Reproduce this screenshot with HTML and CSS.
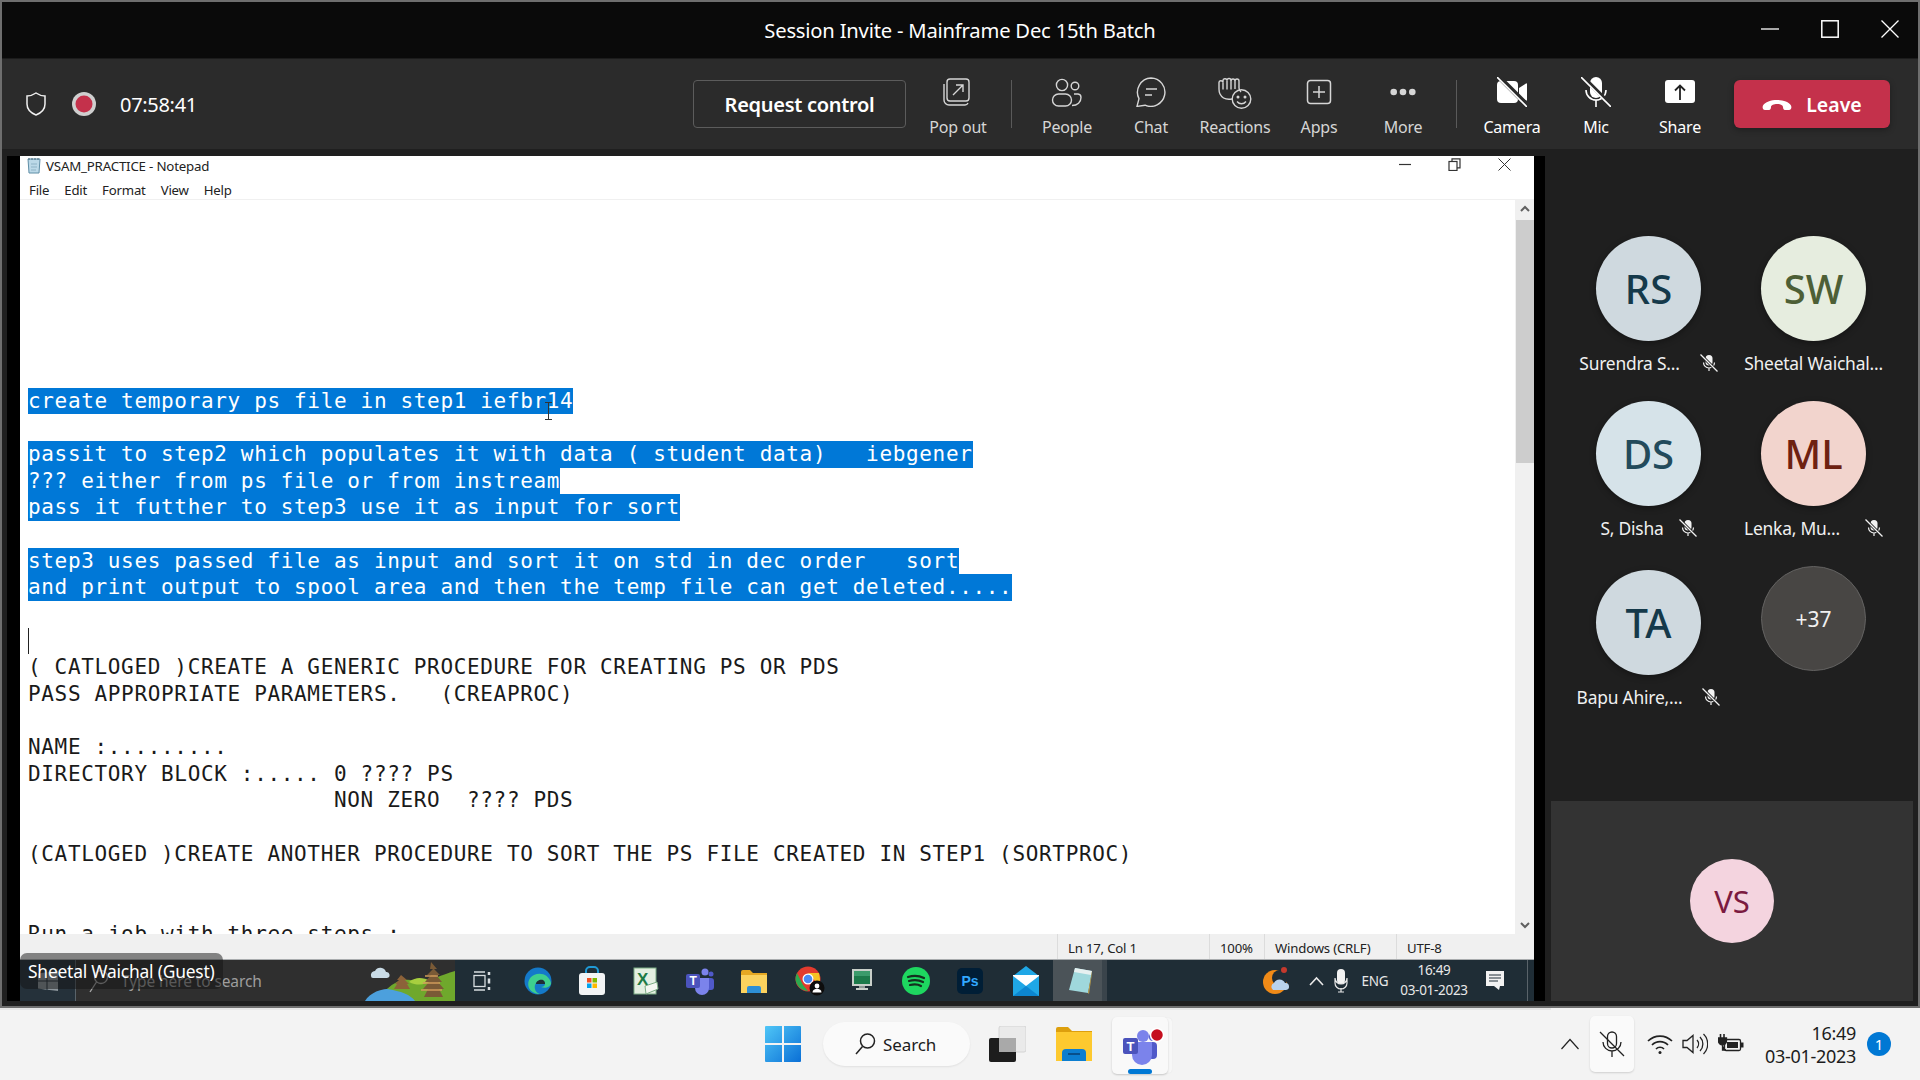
FILE: index.html
```html
<!DOCTYPE html>
<html lang="en">
<head>
<meta charset="utf-8">
<title>Session Invite - Mainframe Dec 15th Batch</title>
<link rel="stylesheet" href="styles.css">
</head>
<body>
<svg class="defs" width="0" height="0">
  <symbol id="micoff" viewBox="0 0 18 18">
    <rect x="5.5" y="1" width="7" height="10.5" rx="3.5" fill="#f2f2f2"/>
    <path d="M3.5 8.5a5.5 5.5 0 0 0 11 0M9 14v3" fill="none" stroke="#f2f2f2" stroke-width="1.2"/>
    <path d="M1.5 1.5l15 15" stroke="#1f1f1f" stroke-width="3"/>
    <path d="M.5 .5l17 17" stroke="#f2f2f2" stroke-width="1.2"/>
  </symbol>
</svg>
<div class="app">
  <header class="titlebar">
    <div class="title">Session Invite - Mainframe Dec 15th Batch</div>
    <div class="winctl">
      <svg width="18" height="18" viewBox="0 0 18 18"><path d="M0 9h18" stroke="#fff" stroke-width="1.3"/></svg>
      <svg width="18" height="18" viewBox="0 0 18 18"><rect x=".8" y=".8" width="16.4" height="16.4" fill="none" stroke="#fff" stroke-width="1.5"/></svg>
      <svg width="18" height="18" viewBox="0 0 18 18"><path d="M.5 .5l17 17M17.5 .5l-17 17" stroke="#fff" stroke-width="1.3"/></svg>
    </div>
  </header>

  <nav class="toolbar">
    <svg class="shield" width="20" height="24" viewBox="0 0 20 24"><path d="M10 1c3 2 5.500 3 9 3v8c0 5-4 9-9 11-5-2-9-6-9-11V4c3.500 0 6-1 9-3z" fill="none" stroke="#f0f0f0" stroke-width="1.5"/></svg>
    <svg class="rec" width="24" height="24" viewBox="0 0 24 24"><circle cx="12" cy="12" r="12" fill="#cfcfcf"/><circle cx="12" cy="12" r="8.500" fill="#c4314b"/></svg>
    <div class="clock">07:58:41</div>
    <div class="spring"></div>
    <button class="request">Request control</button>
    <div class="tool">
      <svg width="30" height="30" viewBox="2 0 30 30" fill="none" stroke="#d6d6d6" stroke-width="1.4"><rect x="6" y="2" width="22" height="22" rx="3"/><path d="M3 7v16a5 5 0 0 0 5 5h16a3.500 3.500 0 0 0 3-2"/><path d="M12 18l10-10M15 8h7v7"/></svg>
      <span>Pop out</span>
    </div>
    <div class="tsep"></div>
    <div class="tool">
      <svg width="32" height="30" viewBox="0 0 32 30" fill="none" stroke="#d6d6d6" stroke-width="1.4"><circle cx="11" cy="8" r="5.600"/><circle cx="24" cy="9" r="3.800"/><rect x="1.500" y="17" width="19" height="12" rx="6"/><path d="M23 17h4a3.500 3.500 0 0 1 3 3.500c0 4.500-3.500 8-9 8"/></svg>
      <span>People</span>
    </div>
    <div class="tool">
      <svg width="32" height="30" viewBox="0 0 32 30" fill="none" stroke="#d6d6d6" stroke-width="1.4"><path d="M16 1a14.200 14.200 0 1 1-6 27.200L2 29.400l2-7.800A14.200 14.200 0 0 1 16 1z"/><path d="M11 12h11M10 18h7"/></svg>
      <span>Chat</span>
    </div>
    <div class="tool">
      <svg width="34" height="32" viewBox="0 0 34 32" fill="none" stroke="#d6d6d6" stroke-width="1.4"><path d="M14 22c-6 1-10-1-12-5-1-2-1-4-1-5V6a2 2 0 0 1 4-.5V4a2 2 0 0 1 4-.5 2 2 0 0 1 4 0V4a2 2 0 0 1 4 0 2 2 0 0 1 4 0v7c0 2 1 3 2 4"/><path d="M5 5.500v7M9 3.500v9M13 3.500v9M17 4v8"/><circle cx="23.500" cy="22" r="9.300"/><circle cx="20" cy="20" r=".8" fill="#d6d6d6"/><circle cx="27" cy="20" r=".8" fill="#d6d6d6"/><path d="M19 24.500c2.500 3 6.500 3 9 0"/></svg>
      <span>Reactions</span>
    </div>
    <div class="tool">
      <svg width="30" height="30" viewBox="0 0 30 30" fill="none" stroke="#d6d6d6" stroke-width="1.5"><rect x="3.500" y="3.500" width="23" height="23" rx="3"/><path d="M15 9v12M9 15h12"/></svg>
      <span>Apps</span>
    </div>
    <div class="tool">
      <svg width="30" height="30" viewBox="0 0 30 30" fill="#d6d6d6"><circle cx="5.700" cy="15" r="3.300"/><circle cx="15" cy="15" r="3.300"/><circle cx="24.300" cy="15" r="3.300"/></svg>
      <span>More</span>
    </div>
    <div class="tsep"></div>
    <div class="tool tool-on">
      <svg width="30" height="30" viewBox="0 0 30 30"><rect y="4" width="21" height="22" rx="4" fill="#fff"/><path d="M22 11l7-4.500a.7.700 0 0 1 1 .5v16a.7.700 0 0 1-1 .5L22 19z" fill="#fff"/><path d="M2 0l28 28" stroke="#2b2b2b" stroke-width="5"/><path d="M0 0l30 30" stroke="#fff" stroke-width="1.600"/></svg>
      <span>Camera</span>
    </div>
    <div class="tool tool-on">
      <svg width="30" height="30" viewBox="0 0 30 30"><rect x="9" y="0" width="12" height="21" rx="6" fill="#fff"/><path d="M5 13a10 10 0 0 0 20 0M15 23v7" fill="none" stroke="#fff" stroke-width="1.600"/><path d="M2 0l28 28" stroke="#2b2b2b" stroke-width="4"/><path d="M0 0l30 30" stroke="#fff" stroke-width="1.600"/></svg>
      <span>Mic</span>
    </div>
    <div class="tool tool-on">
      <svg width="30" height="30" viewBox="0 0 30 30"><rect y="3" width="30" height="23" rx="3" fill="#fff"/><path d="M15 23V9M10 13.500L15 8.500l5 5" fill="none" stroke="#222" stroke-width="1.800"/></svg>
      <span>Share</span>
    </div>
    <button class="leave">
      <svg width="30" height="14" viewBox="0 0 30 14"><path d="M1 8.500C5 1 25 1 29 8.500c1 2.500 0 4.500-2 4.500h-4c-1.500 0-2-1.500-2-3 0-2-3-3-6-3s-6 1-6 3c0 1.500-.5 3-2 3H3c-2 0-3-2-2-4.500z" fill="#fff"/></svg>
      <span>Leave</span>
    </button>
  </nav>

  <main class="stage">
    <section class="share">
      <div class="notepad">
        <div class="np-title">
          <svg width="17" height="18" viewBox="0 0 17 18"><path d="M2 2h12l-1 14H3z" fill="#bcd9e8" stroke="#5f8ea6" stroke-width="1"/><path d="M3 1v2M6 1v2M9 1v2M12 1v2" stroke="#4a6b7c"/><path d="M5 7h6M5 10h6M5 13h5" stroke="#8fb3c6"/></svg>
          <span>VSAM_PRACTICE - Notepad</span>
          <div class="np-ctl">
            <svg width="12" height="12" viewBox="0 0 12 12"><path d="M0 6.500h12" stroke="#333" stroke-width="1.200"/></svg>
            <svg width="13" height="13" viewBox="0 0 13 13" fill="none" stroke="#333" stroke-width="1.200"><rect x="1" y="3.500" width="8" height="9"/><path d="M4 3.500V.8h8v9H9"/></svg>
            <svg width="13" height="13" viewBox="0 0 13 13"><path d="M.5 .5l12 12M12.500 .5l-12 12" stroke="#333" stroke-width="1"/></svg>
          </div>
        </div>
        <div class="np-menu"><span>File</span><span>Edit</span><span>Format</span><span>View</span><span>Help</span></div>
        <div class="np-body">
          <div class="doc">
            <div class="ln"> </div><div class="ln"> </div><div class="ln"> </div><div class="ln"> </div><div class="ln"> </div><div class="ln"> </div><div class="ln"> </div>
            <div class="ln"><span class="sel">create temporary ps file in step1 iefbr14</span></div>
            <div class="ln"> </div>
            <div class="ln"><span class="sel">passit to step2 which populates it with data ( student data)   iebgener</span></div>
            <div class="ln"><span class="sel">??? either from ps file or from instream</span></div>
            <div class="ln"><span class="sel">pass it futther to step3 use it as input for sort</span></div>
            <div class="ln"> </div>
            <div class="ln"><span class="sel">step3 uses passed file as input and sort it on std in dec order   sort</span></div>
            <div class="ln"><span class="sel">and print output to spool area and then the temp file can get deleted.....</span></div>
            <div class="ln"> </div>
            <div class="ln caret"> </div>
            <div class="ln">( CATLOGED )CREATE A GENERIC PROCEDURE FOR CREATING PS OR PDS</div>
            <div class="ln">PASS APPROPRIATE PARAMETERS.   (CREAPROC)</div>
            <div class="ln"> </div>
            <div class="ln">NAME :.........</div>
            <div class="ln">DIRECTORY BLOCK :..... 0 ???? PS</div>
            <div class="ln">                       NON ZERO  ???? PDS</div>
            <div class="ln"> </div>
            <div class="ln">(CATLOGED )CREATE ANOTHER PROCEDURE TO SORT THE PS FILE CREATED IN STEP1 (SORTPROC)</div>
            <div class="ln"> </div>
            <div class="ln"> </div>
            <div class="ln">Run a job with three steps :</div>
            <svg class="ibeam" width="9" height="18" viewBox="0 0 9 18"><path d="M1 .5h7M4.500 .5v17M1 17.500h7" stroke="#333" stroke-width="1" fill="none"/></svg>
          </div>
          <div class="scroll">
            <svg class="sc-arrow" width="18" height="18" viewBox="0 0 18 18"><path d="M5 11l4-4 4 4" fill="none" stroke="#606060" stroke-width="2"/></svg>
            <div class="sc-thumb"></div>
            <svg class="sc-arrow sc-down" width="18" height="18" viewBox="0 0 18 18"><path d="M5 7l4 4 4-4" fill="none" stroke="#606060" stroke-width="2"/></svg>
          </div>
        </div>
        <div class="np-status">
          <span class="st st-ln">Ln 17, Col 1</span>
          <span class="st st-zoom">100%</span>
          <span class="st st-crlf">Windows (CRLF)</span>
          <span class="st st-enc">UTF-8</span>
        </div>
      </div>

      <div class="w10bar">
        <div class="w10start">
          <svg width="20" height="20" viewBox="0 0 20 20" fill="#8b949a"><path d="M0 2.500l8.500-1.200V9.500H0zM9.500 1.200L20 0v9.500H9.500zM0 10.500h8.500v8.200L0 17.500zM9.500 10.500H20V20L9.500 18.800z"/></svg>
        </div>
        <div class="w10search">
          <svg width="22" height="26" viewBox="0 0 22 26" fill="none" stroke="#a8a8a8" stroke-width="1.300"><circle cx="13" cy="9" r="6.500"/><path d="M8.500 14L2 24"/></svg>
          <span>Type here to search</span>
          <svg class="scene" width="90" height="41" viewBox="0 0 90 41">
            <path d="M6 16a4 4 0 0 1 4-5 6 6 0 0 1 11 1 3 3 0 0 1 1 6H8a2 2 0 0 1-2-2z" fill="#c9dbe6"/>
            <path d="M0 41c6-10 20-14 36-12 14 2 24 6 30 12z" fill="#4ca0dd"/>
            <path d="M22 29c10-10 22-12 34-6 10-3 20-8 34-12v30H50c-4-6-14-10-28-12z" fill="#6fa82c"/>
            <path d="M44 22c8-6 14-4 22-1-6 4-14 5-22 1z" fill="#a8cf3f"/>
            <path d="M36 15l6 5h-2l4 4h-2l3 5H29l3-5h-2l4-4h-2z" fill="#8c6239"/>
            <path d="M66 2l6 7h-3l6 6h-4l6 7h-4l6 7h-5l4 8H59l4-8h-5l6-7h-4l6-7h-4l6-6h-3z" fill="#7a5a36"/>
            <path d="M60 16h13M58 23h17M56 30h21" stroke="#d19a5b" stroke-width="1.500"/>
          </svg>
        </div>
        <div class="wi wi-first"><svg width="20" height="20" viewBox="0 0 20 20" fill="none" stroke="#d8dde0" stroke-width="1.300"><path d="M2 1h11M2 19h11"/><rect x="2" y="4.500" width="11" height="11"/><path d="M17 1v3M17 7.500v5M17 16v3" stroke-width="2.500"/></svg></div>
        <div class="wi"><svg width="28" height="28" viewBox="0 0 28 28"><circle cx="14" cy="14" r="13.500" fill="#1479c9"/><path d="M27 16C25 8 17 5 10 8 5 10 3 16 5 21c2 4 7 6 11 6-4-1-6-5-5-9 1-3 4-5 7-4 2 .5 3 2 3 3 0 2-2 3-4 3 4 2 10 0 10-4z" fill="#3ecf8e"/><path d="M12 17c0-3 4-5 7-4 2 1 2 3 2 4h-9z" fill="#1f2d36"/></svg></div>
        <div class="wi"><svg width="28" height="30" viewBox="0 0 28 30"><path d="M8 9V5a4 4 0 0 1 4-4h4a4 4 0 0 1 4 4v4" fill="none" stroke="#1f9ad6" stroke-width="2"/><rect x="1" y="7" width="26" height="22" rx="3" fill="#f2f4f5"/><rect x="9" y="12" width="4.500" height="4.500" fill="#f25022"/><rect x="14.500" y="12" width="4.500" height="4.500" fill="#7fba00"/><rect x="9" y="17.500" width="4.500" height="4.500" fill="#00a4ef"/><rect x="14.500" y="17.500" width="4.500" height="4.500" fill="#ffb900"/></svg></div>
        <div class="wi"><svg width="26" height="28" viewBox="0 0 26 28"><rect x="1" y="1" width="22" height="26" fill="#e3efe1" stroke="#7bab84"/><text class="ico-x" x="4" y="18">X</text><path d="M12 19l12-4 1 7-12 5z" fill="#f3f6f1" stroke="#7bab84"/></svg></div>
        <div class="wi"><svg width="28" height="28" viewBox="0 0 28 28"><circle cx="19" cy="5" r="3.500" fill="#7b83eb"/><circle cx="25" cy="7" r="2.500" fill="#5059c9"/><rect x="20" y="11" width="8" height="12" rx="3" fill="#5059c9"/><path d="M9 11h14v10a7 7 0 0 1-14 0z" fill="#7b83eb"/><rect y="7" width="14" height="14" rx="2" fill="#4b53bc"/><text class="ico-t" x="3.500" y="18">T</text></svg></div>
        <div class="wi"><svg width="26" height="24" viewBox="0 0 26 24"><path d="M0 3a2 2 0 0 1 2-2h7l3 3h14v4H0z" fill="#e6a823"/><rect y="6" width="26" height="18" fill="#fbd25e"/><path d="M6 24v-5a2 2 0 0 1 2-2h10a2 2 0 0 1 2 2v5z" fill="#2d8fd6"/></svg></div>
        <div class="wi"><svg class="ico-chrome" width="30" height="30" viewBox="0 0 30 30"><circle cx="13" cy="13" r="12.500" fill="#e33b2e"/><path d="M2 7l6 12 5 6c-6 0-12-5-12.500-12 0-2 .5-4 1.500-6z" fill="#2da94f"/><path d="M13 7h11l1 6c0 5-3 10-8 12l4-9z" fill="#f7c325"/><circle cx="13" cy="13" r="5.500" fill="#fff"/><circle cx="13" cy="13" r="4.300" fill="#4a8af4"/><circle cx="22" cy="22" r="7.500" fill="#0d0d0d"/><circle cx="22" cy="20" r="2.400" fill="#fff"/><path d="M17.500 26.500c0-5 9-5 9 0z" fill="#fff"/></svg></div>
        <div class="wi"><svg width="20" height="24" viewBox="0 0 20 24"><rect width="20" height="17" fill="#c8cfc9"/><rect x="2" y="2" width="16" height="13" fill="#1c7a4a"/><rect x="2" y="2" width="16" height="5" fill="#3b9b6b"/><path d="M7 17h6v2H7z" fill="#8f9a96"/><rect x="4" y="19" width="12" height="2" fill="#c8cfc9"/></svg></div>
        <div class="wi"><svg width="28" height="28" viewBox="0 0 28 28"><circle cx="14" cy="14" r="14" fill="#1ed760"/><path d="M6 10c6-2 11-1.500 16 1M7 14c5-1.500 10-1 14 1M8 18c4-1 8-.8 11 1" fill="none" stroke="#14301f" stroke-width="2.200" stroke-linecap="round"/></svg></div>
        <div class="wi"><svg width="26" height="26" viewBox="0 0 26 26"><rect width="26" height="26" rx="5" fill="#001e36"/><text class="ico-ps" x="4.500" y="18">Ps</text></svg></div>
        <div class="wi wi-shift"><svg width="26" height="30" viewBox="0 0 26 30"><path d="M13 0l13 10v20H0V10z" fill="#1fa7e6"/><path d="M0 10l13 10 13-10v-1H0z" fill="#fff"/><path d="M0 30l13-10 13 10z" fill="#0c86d0"/></svg></div>
        <div class="wi wi-active"><svg width="24" height="28" viewBox="0 0 24 28"><path d="M7 1l17 3-4 22L1 23z" fill="#9fd8dc"/><path d="M7 1l17 3-1 4L6 5z" fill="#e6f0f0"/><path d="M20 26l4-22 0 2-3 21z" fill="#c3a34a"/></svg></div>
        <div class="tray10">
          <div class="tr-w"><svg width="28" height="30" viewBox="0 0 28 30"><circle cx="13" cy="16" r="12" fill="#f08a17"/><circle cx="18" cy="12" r="8" fill="#1f2d36"/><path d="M11 24a4 4 0 0 1 1-7 6 6 0 0 1 11 0 3.500 3.500 0 0 1 1 7z" fill="#b9d3ec"/><circle cx="22" cy="4" r="3" fill="#c4392d"/></svg></div>
          <div class="tr-c"><svg width="15" height="10" viewBox="0 0 15 10"><path d="M1 9l6.500-7L14 9" fill="none" stroke="#e8e8e8" stroke-width="1.600"/></svg></div>
          <div class="tr-m"><svg width="14" height="24" viewBox="0 0 14 24"><rect x="3" y="0" width="8" height="15" rx="4" fill="#f2f2f2"/><path d="M1 9a6 6 0 0 0 12 0v5a6 6 0 0 1-12 0zM7 19v4M4 23h6" fill="none" stroke="#e8e8e8" stroke-width="1.200"/></svg></div>
          <div class="tr-e">ENG</div>
          <div class="tr-t"><span>16:49</span><span>03-01-2023</span></div>
          <div class="tr-n"><svg width="20" height="20" viewBox="0 0 20 20"><path d="M1 0h18v15h-4l-1 4-5-4H1z" fill="#f2f2f2"/><path d="M4 4h12M4 7h12M4 10h9" stroke="#1f2d36" stroke-width="1.200"/></svg></div>
        </div>
      </div>
      <div class="nametag">Sheetal Waichal (Guest)</div>
    </section>

    <aside class="side">
      <div class="roster">
        <div class="tile">
          <div class="av av-rs">RS</div>
          <div class="who"><span>Surendra S...</span><svg width="18" height="18"><use href="#micoff"/></svg></div>
        </div>
        <div class="tile">
          <div class="av av-sw">SW</div>
          <div class="who"><span>Sheetal Waichal...</span></div>
        </div>
        <div class="tile">
          <div class="av av-ds">DS</div>
          <div class="who who-s"><span>S, Disha</span><svg width="18" height="18"><use href="#micoff"/></svg></div>
        </div>
        <div class="tile">
          <div class="av av-ml">ML</div>
          <div class="who who-l"><span>Lenka, Mu...</span><svg width="18" height="18"><use href="#micoff"/></svg></div>
        </div>
        <div class="tile tile-low">
          <div class="av av-rs">TA</div>
          <div class="who"><span>Bapu Ahire,...</span><svg width="18" height="18"><use href="#micoff"/></svg></div>
        </div>
        <div class="tile">
          <div class="av av-more">+37</div>
        </div>
      </div>
      <div class="self"><div class="av-vs">VS</div></div>
    </aside>
  </main>
</div>

<footer class="w11">
  <svg class="w-start" width="36" height="36" viewBox="0 0 36 36">
    <defs><linearGradient id="wb" x1="0" y1="0" x2="1" y2="1"><stop offset="0" stop-color="#4fc6f7"/><stop offset="1" stop-color="#0a6fd6"/></linearGradient></defs>
    <path d="M1 0h16v17H0V1a1 1 0 0 1 1-1zM19 0h16a1 1 0 0 1 1 1v16H19zM0 19h17v17H1a1 1 0 0 1-1-1zM19 19h17v16a1 1 0 0 1-1 1H19z" fill="url(#wb)"/>
  </svg>
  <div class="w-search">
    <svg width="22" height="24" viewBox="0 0 22 24" fill="none" stroke="#222" stroke-width="1.500"><circle cx="13.500" cy="9" r="7"/><path d="M8.500 14.500L2 22"/></svg>
    <span>Search</span>
  </div>
  <svg class="w-tv" width="37" height="36" viewBox="0 0 37 36">
    <rect x="10" y="0" width="27" height="26" rx="2" fill="#eaeaea" stroke="#d4d4d4"/>
    <rect x="0" y="12" width="27" height="24" rx="2" fill="#1d1d1d"/>
    <rect x="10" y="12" width="17" height="14" fill="#a9a9a9"/>
  </svg>
  <svg class="w-folder" width="36" height="34" viewBox="0 0 36 34">
    <path d="M0 2a2 2 0 0 1 2-2h10l4 4h20v8H0z" fill="#dd9f0d"/>
    <rect y="5" width="36" height="29" fill="#fdc92f"/>
    <path d="M6 34V26a4 4 0 0 1 4-4h16a4 4 0 0 1 4 4v8z" fill="#0c7ed0"/>
    <path d="M12 27h12" stroke="#084f8a" stroke-width="2"/>
  </svg>
  <div class="w-teams">
    <svg width="44" height="38" viewBox="0 0 44 38">
      <circle cx="23" cy="9" r="6" fill="#7b83eb"/>
      <circle cx="33" cy="10" r="4" fill="#5059c9"/>
      <rect x="28" y="15" width="9" height="17" rx="4" fill="#5059c9"/>
      <path d="M12 15h20v13a10 10 0 0 1-20 0z" fill="#7b83eb"/>
      <rect x="3" y="11" width="15" height="16" rx="2" fill="#4b53bc"/>
      <text class="ico-tt" x="6.500" y="24">T</text>
      <circle cx="37" cy="8" r="6.500" fill="#c50f1f" stroke="#fff" stroke-width="1.500"/>
    </svg>
    <i class="w-ind"></i>
  </div>
  <div class="w-tray">
    <svg class="w-caret" width="20" height="12" viewBox="0 0 20 12"><path d="M1.500 11L10 1.500 18.500 11" fill="none" stroke="#222" stroke-width="1.200"/></svg>
    <div class="w-mic">
      <svg width="26" height="26" viewBox="0 0 26 26" fill="none" stroke="#222" stroke-width="1.300"><rect x="8.500" y="1" width="9" height="16" rx="4.500"/><path d="M4 11a9 9 0 0 0 18 0M13 20v6"/><path d="M1 1l24 24"/></svg>
    </div>
    <svg class="w-wifi" width="28" height="22" viewBox="0 0 28 22" fill="none" stroke="#222" stroke-width="1.700"><path d="M2 8a17 17 0 0 1 24 0M6 12a11 11 0 0 1 16 0M10 16a5.500 5.500 0 0 1 8 0"/><circle cx="14" cy="19.500" r="1.500" fill="#222" stroke="none"/></svg>
    <svg class="w-vol" width="26" height="22" viewBox="0 0 26 22" fill="none" stroke="#222" stroke-width="1.300"><path d="M1 7.500h4l6-5v17l-6-5H1z"/><path d="M15 7a6 6 0 0 1 0 8M18 4a10 10 0 0 1 0 14M21.500 1a14 14 0 0 1 0 20"/></svg>
    <svg class="w-bat" width="26" height="20" viewBox="0 0 26 20" fill="none" stroke="#222" stroke-width="1.300"><path d="M2.500 0v4M6 0v4" stroke-width="1.600"/><path d="M.5 4h8v3a4 4 0 0 1-8 0zM4.500 11v5H8" fill="#222"/><rect x="6.500" y="5.500" width="16" height="11" rx="1.500"/><rect x="9" y="8" width="11" height="6" fill="#222" stroke="none"/><path d="M23 8.500h2.500v5H23z" fill="#222" stroke="none"/></svg>
    <div class="w-clock"><span>16:49</span><span>03-01-2023</span></div>
    <div class="w-badge">1</div>
  </div>
</footer>
</body>
</html>
```

FILE: styles.css
```css
* { box-sizing: border-box; }
html, body { margin: 0; padding: 0; }
body {
  width: 1920px;
  height: 1080px;
  overflow: hidden;
  font-family: "Noto Sans", "Open Sans", sans-serif;
  background: #f3f3f3;
}
.defs { position: absolute; }

.app {
  height: 1008px;
  border: 2px solid #6e6e6e;
  background: #1f1f1f;
  display: flex;
  flex-direction: column;
}

.titlebar {
  height: 57px;
  flex: none;
  background: #0a0a0a;
  border-bottom: 1px solid #1c1c1c;
  position: relative;
  display: flex;
  align-items: center;
  justify-content: flex-end;
}
.title {
  position: absolute;
  left: 0;
  right: 0;
  top: 0;
  bottom: 0;
  display: flex;
  align-items: center;
  justify-content: center;
  color: #fff;
  font-size: 20.200px;
  letter-spacing: -0.2px;
}
.winctl {
  display: flex;
  gap: 42px;
  padding: 0 19px 2px 0;
}

.toolbar {
  height: 90px;
  flex: none;
  background: #2b2b2b;
  display: flex;
  align-items: center;
  padding: 0 28px 0 24px;
}
.shield { flex: none; }
.rec { flex: none; margin-left: 26px; }
.clock { margin-left: 24px; color: #fff; font-size: 20px; letter-spacing: -0.3px; }
.spring { flex: 1; }
.request {
  width: 213px;
  height: 48px;
  margin-right: 10px;
  border: 1px solid #5c5c5c;
  border-radius: 4px;
  background: #2b2b2b;
  color: #fff;
  font: 600 20px "Noto Sans", sans-serif;
  letter-spacing: -0.3px;
}
.tool {
  width: 84px;
  height: 70px;
  flex: none;
  display: flex;
  flex-direction: column;
  align-items: center;
  justify-content: space-between;
  color: #d6d6d6;
  font-size: 16px;
  letter-spacing: -0.2px;
  line-height: 24px;
  padding-top: 8px;
}
.tool svg { flex: none; }
.tool-on { color: #fff; }
.tsep {
  width: 1px;
  height: 48px;
  flex: none;
  margin: 0 13px 0 11px;
  background: #5a5a5a;
}
.leave {
  width: 156px;
  height: 48px;
  margin-left: 12px;
  border: 0;
  border-radius: 6px;
  background: #c4314b;
  color: #fff;
  font: 600 19.500px "Noto Sans", sans-serif;
  display: flex;
  align-items: center;
  justify-content: center;
  gap: 14px;
  box-shadow: 0 2px 6px rgba(0,0,0,.3);
}

.stage {
  flex: 1;
  min-height: 0;
  display: flex;
  padding: 7px 0 5px 5px;
  gap: 6px;
}
.share {
  width: 1538px;
  flex: none;
  background: #000;
  padding: 0 11px 0 13px;
  display: flex;
  flex-direction: column;
  position: relative;
}

.notepad {
  flex: 1;
  min-height: 0;
  background: #fff;
  display: flex;
  flex-direction: column;
}
.np-title {
  height: 21px;
  flex: none;
  display: flex;
  align-items: center;
  padding: 0 23px 2px 6px;
  font-size: 13.300px;
  letter-spacing: -0.2px;
  color: #222;
  gap: 3px;
}
.np-ctl {
  margin-left: auto;
  display: flex;
  align-items: center;
  gap: 37px;
  padding-bottom: 3px;
}
.np-menu {
  height: 23px;
  flex: none;
  display: flex;
  gap: 15px;
  align-items: center;
  padding: 4px 0 0 9px;
  font-size: 13.200px;
  letter-spacing: -0.2px;
  color: #222;
  border-bottom: 1px solid #f0f0f0;
}
.np-body {
  flex: 1;
  min-height: 0;
  display: flex;
  overflow: hidden;
}
.doc {
  flex: 1;
  min-width: 0;
  padding: 1px 0 0 8px;
  position: relative;
  overflow: hidden;
  font-family: "DejaVu Sans Mono", monospace;
  font-size: 21px;
  letter-spacing: 0.66px;
  color: #1a1a1a;
}
.ln {
  height: 26.670px;
  line-height: 26.670px;
  white-space: pre;
}
.sel {
  display: inline-block;
  height: 26.670px;
  background: #0078d7;
  color: #fff;
}
.caret { border-left: 1px solid #222; }
.ibeam { position: absolute; left: 524px; top: 202px; }
.scroll {
  width: 19px;
  flex: none;
  background: #f0f0f0;
  display: flex;
  flex-direction: column;
  align-items: center;
}
.sc-arrow { flex: none; }
.sc-thumb {
  width: 18px;
  height: 243px;
  margin-top: 2px;
  background: #cdcdcd;
}
.sc-down { margin-top: auto; }
.np-status {
  height: 26px;
  flex: none;
  background: #f0f0f0;
  border-bottom: 1px solid #a9acae;
  display: flex;
  align-items: center;
  padding-left: 1037px;
  font-size: 13.200px;
  letter-spacing: -0.2px;
  color: #222;
}
.st {
  height: 25px;
  line-height: 28px;
  padding-left: 10px;
  border-left: 1px solid #dcdcdc;
  flex: none;
}
.st-ln { width: 152px; }
.st-zoom { width: 55px; }
.st-crlf { width: 132px; }
.st-enc { width: 100px; }

.w10bar {
  height: 41px;
  flex: none;
  background: #1f2d36;
  display: flex;
  align-items: center;
}
.w10start {
  width: 55px;
  height: 41px;
  flex: none;
  background: #25313a;
  display: flex;
  align-items: center;
  justify-content: center;
}
.w10search {
  width: 380px;
  height: 41px;
  flex: none;
  display: flex;
  align-items: center;
  gap: 11px;
  padding-left: 12px;
  background: #2f2f2f;
  border-left: 1px solid #59636a;
  position: relative;
  color: #9e9e9e;
  font-size: 15.500px;
  letter-spacing: -0.1px;
  overflow: hidden;
}
.scene { margin-left: auto; }
.wi {
  width: 54px;
  height: 41px;
  flex: none;
  display: flex;
  align-items: center;
  justify-content: center;
}
.wi-first { margin-right: 2px; }
.wi-shift { margin-left: 2px; }
.ico-chrome { margin-left: 4px; }
.wi-active { background: linear-gradient(90deg, #4b5358 49px, #3a444b 49px); }
.ico-x { font: 700 17px "Liberation Sans", sans-serif; fill: #1d7a45; }
.ico-t { font: 700 12px "Liberation Sans", sans-serif; fill: #fff; }
.ico-tt { font: 700 13px "Liberation Sans", sans-serif; fill: #fff; }
.ico-ps { font: 700 14px "Liberation Sans", sans-serif; fill: #31a8ff; }
.tray10 {
  margin-left: 151px;
  display: flex;
  align-items: center;
  height: 41px;
  flex: 1;
  border-right: 1px solid #59636a;
  margin-right: 6px;
  color: #e8e8e8;
}
.tr-w { width: 36px; display: flex; justify-content: center; flex: none; }
.tr-c { width: 24px; margin-left: 10px; display: flex; justify-content: center; flex: none; }
.tr-m { width: 24px; margin-left: 1px; display: flex; justify-content: center; flex: none; }
.tr-e { width: 36px; margin-left: 4px; text-align: center; font-size: 13.500px; flex: none; letter-spacing: -0.2px; }
.tr-t {
  width: 80px;
  margin-left: 1px;
  flex: none;
  display: flex;
  flex-direction: column;
  align-items: center;
  gap: 1px;
  font-size: 13.500px;
  letter-spacing: -0.3px;
  line-height: 19px;
}
.tr-n { width: 28px; margin-left: 7px; display: flex; justify-content: center; flex: none; }

.nametag {
  position: absolute;
  left: 13px;
  bottom: 12px;
  width: 203px;
  height: 36px;
  border-radius: 7px;
  background: rgba(20,20,20,.5);
  color: #fff;
  font-size: 17.400px;
  letter-spacing: -0.2px;
  line-height: 36px;
  padding-left: 8px;
  white-space: nowrap;
}

.side {
  flex: 1;
  min-width: 0;
  display: flex;
  flex-direction: column;
  padding-right: 5px;
}
.roster {
  display: grid;
  grid-template-columns: 165px 165px;
  margin: 80px 0 0 15px;
  color: #f0f0f0;
}
.tile {
  height: 165px;
  display: flex;
  flex-direction: column;
  align-items: center;
}
.tile-low { padding-top: 4px; }
.av {
  width: 105px;
  height: 105px;
  flex: none;
  border-radius: 50%;
  display: flex;
  align-items: center;
  justify-content: center;
  font-size: 40px;
  font-weight: 500;
  box-shadow: 0 2px 6px rgba(0,0,0,.35);
}
.av-rs { background: #cfd9df; color: #15394a; }
.av-sw { background: #e6eddf; color: #4d5f36; }
.av-ds { background: #d6e3e9; color: #234b5c; }
.av-ml { background: #f2d4cd; color: #6e2111; }
.av-more {
  background: #484644;
  border: 1px solid #636261;
  color: #f0f0f0;
  font-size: 21px;
  font-weight: 400;
  box-shadow: none;
}
.who {
  margin-top: 10px;
  height: 24px;
  display: flex;
  align-items: center;
  gap: 20px;
  font-size: 17.400px;
  letter-spacing: -0.2px;
  white-space: nowrap;
}
.who-s { gap: 15px; }
.who-l { gap: 25px; }
.self {
  height: 200px;
  margin-top: auto;
  background: #333;
  display: flex;
  align-items: center;
  justify-content: center;
}
.av-vs {
  width: 84px;
  height: 84px;
  border-radius: 50%;
  background: #f4d4df;
  color: #7b1a40;
  font-size: 31px;
  display: flex;
  align-items: center;
  justify-content: center;
}

.w11 {
  height: 72px;
  display: flex;
  align-items: center;
  background: #f3f3f3 linear-gradient(#e6e6e6, #e6e6e6) 0 0 / 1551px 2px no-repeat;
  color: #1c1c1c;
}
.w-start { margin-left: 765px; flex: none; }
.w-search {
  width: 147px;
  height: 44px;
  margin-left: 22px;
  flex: none;
  border-radius: 22px;
  background: #fafafa;
  box-shadow: 0 1px 2px rgba(0,0,0,.08);
  display: flex;
  align-items: center;
  gap: 7px;
  padding-left: 31px;
  font-size: 17px;
  letter-spacing: -0.1px;
}
.w-tv { margin-left: 19px; flex: none; }
.w-folder { margin-left: 30px; flex: none; }
.w-teams {
  width: 56px;
  height: 57px;
  margin-left: 20px;
  margin-top: 3px;
  flex: none;
  background: #f9f9f9;
  border-radius: 5px;
  box-shadow: 0 1px 2px rgba(0,0,0,.18), 5px 0 0 -1px #f7f7f7, 5px 0 1px -1px #ddd;
  display: flex;
  flex-direction: column;
  align-items: center;
  padding: 10px 0 0 4px;
  position: relative;
}
.w-ind {
  position: absolute;
  left: 16px;
  bottom: 0;
  width: 24px;
  height: 5px;
  border-radius: 3px;
  background: #0078d4;
}
.w-tray {
  margin-left: auto;
  padding-right: 29px;
  display: flex;
  align-items: center;
}
.w-caret { flex: none; }
.w-mic {
  width: 44px;
  height: 56px;
  margin-left: 10px;
  flex: none;
  border-radius: 5px;
  background: #fafafa;
  box-shadow: 0 1px 2px rgba(0,0,0,.15);
  display: flex;
  align-items: center;
  justify-content: center;
}
.w-wifi { margin-left: 12px; flex: none; }
.w-vol { margin-left: 8px; flex: none; }
.w-bat { margin-left: 10px; flex: none; }
.w-clock {
  width: 112px;
  flex: none;
  display: flex;
  flex-direction: column;
  align-items: flex-end;
  font-size: 18px;
  letter-spacing: -0.3px;
  line-height: 23px;
  padding-top: 1px;
}
.w-badge {
  width: 24px;
  height: 24px;
  margin-left: 11px;
  flex: none;
  border-radius: 50%;
  background: #0078d4;
  color: #fff;
  text-align: center;
  font-size: 15px;
  line-height: 24px;
}
```
